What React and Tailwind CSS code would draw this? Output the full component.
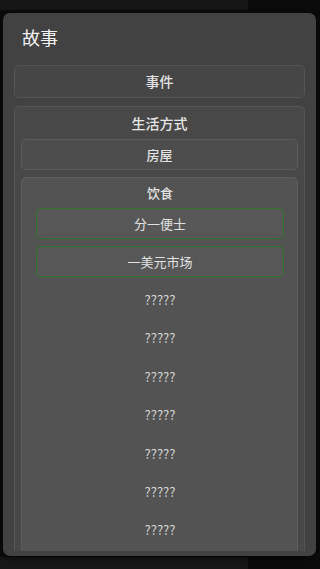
import React from 'react';

const cjk = { fontFamily: '"Noto Sans CJK SC", "Noto Sans", sans-serif' };

const foods = ['分一便士', '一美元市场'];
const unknown = ['?????', '?????', '?????', '?????', '?????', '?????', '?????'];

const App = () => {
  return (
    <div className="relative w-[320px] h-[569px] bg-[#0b0b0b] overflow-hidden" style={cjk}>
      {/* page behind the modal */}
      <div className="flex flex-col justify-between h-full">
        <div className="w-[248px] h-[10px] bg-[#161616]" />
        <div className="flex h-[12px]">
          <div className="w-[248px] bg-[#171717]" />
          <div className="flex-1" />
        </div>
      </div>

      {/* dialog */}
      <div className="absolute left-[3px] top-[13px] w-[313px] h-[543px] rounded-[7px] bg-[#424242] shadow-[0_2px_6px_rgba(0,0,0,0.6)] flex flex-col">
        <div className="px-[19px] pt-[11px] h-[52px] text-[18px] leading-[26px] text-[#f2f2f2]">故事</div>

        <div className="flex-1 min-h-0 mb-[5px] overflow-hidden px-[11px] flex flex-col gap-[8px]">
          <div className="h-[33px] shrink-0 rounded-[5px] border border-[#555555] bg-[#464646] flex items-center justify-center text-[14px] font-medium text-[#e4e4e4]">
            事件
          </div>

          <div className="shrink-0 rounded-[5px] border border-[#565656] bg-[#484848] px-[6px] pb-[6px] flex flex-col">
            <div className="h-[32px] shrink-0 flex items-center justify-center text-[14px] font-medium text-[#e6e6e6]">
              生活方式
            </div>
            <div className="flex flex-col gap-[7px]">
              <div className="h-[31px] shrink-0 rounded-[5px] border border-[#5c5c5c] bg-[#4d4d4d] flex items-center justify-center text-[13px] font-medium text-[#e4e4e4]">
                房屋
              </div>

              <div className="shrink-0 rounded-[5px] border border-[#5e5e5e] bg-[#535353] pl-[14px] pr-[13px] pb-[8px] flex flex-col">
                <div className="h-[30px] shrink-0 flex items-center justify-center text-[13px] font-medium text-[#e4e4e4]">
                  饮食
                </div>
                <div className="flex flex-col gap-[7px]">
                  {foods.map((f) => (
                    <div
                      key={f}
                      className="h-[31px] shrink-0 rounded-[5px] border-[1.5px] border-[#2b772b] bg-[#575757] flex items-center justify-center text-[13px] text-[#e2e2e2]"
                    >
                      {f}
                    </div>
                  ))}
                  {unknown.map((u, i) => (
                    <div
                      key={i}
                      className="h-[31.4px] shrink-0 flex items-center justify-center text-[13px] text-[#d6d6d6]"
                    >
                      {u}
                    </div>
                  ))}
                </div>
              </div>
            </div>
          </div>
        </div>
      </div>
    </div>
  );
};

export default App;
